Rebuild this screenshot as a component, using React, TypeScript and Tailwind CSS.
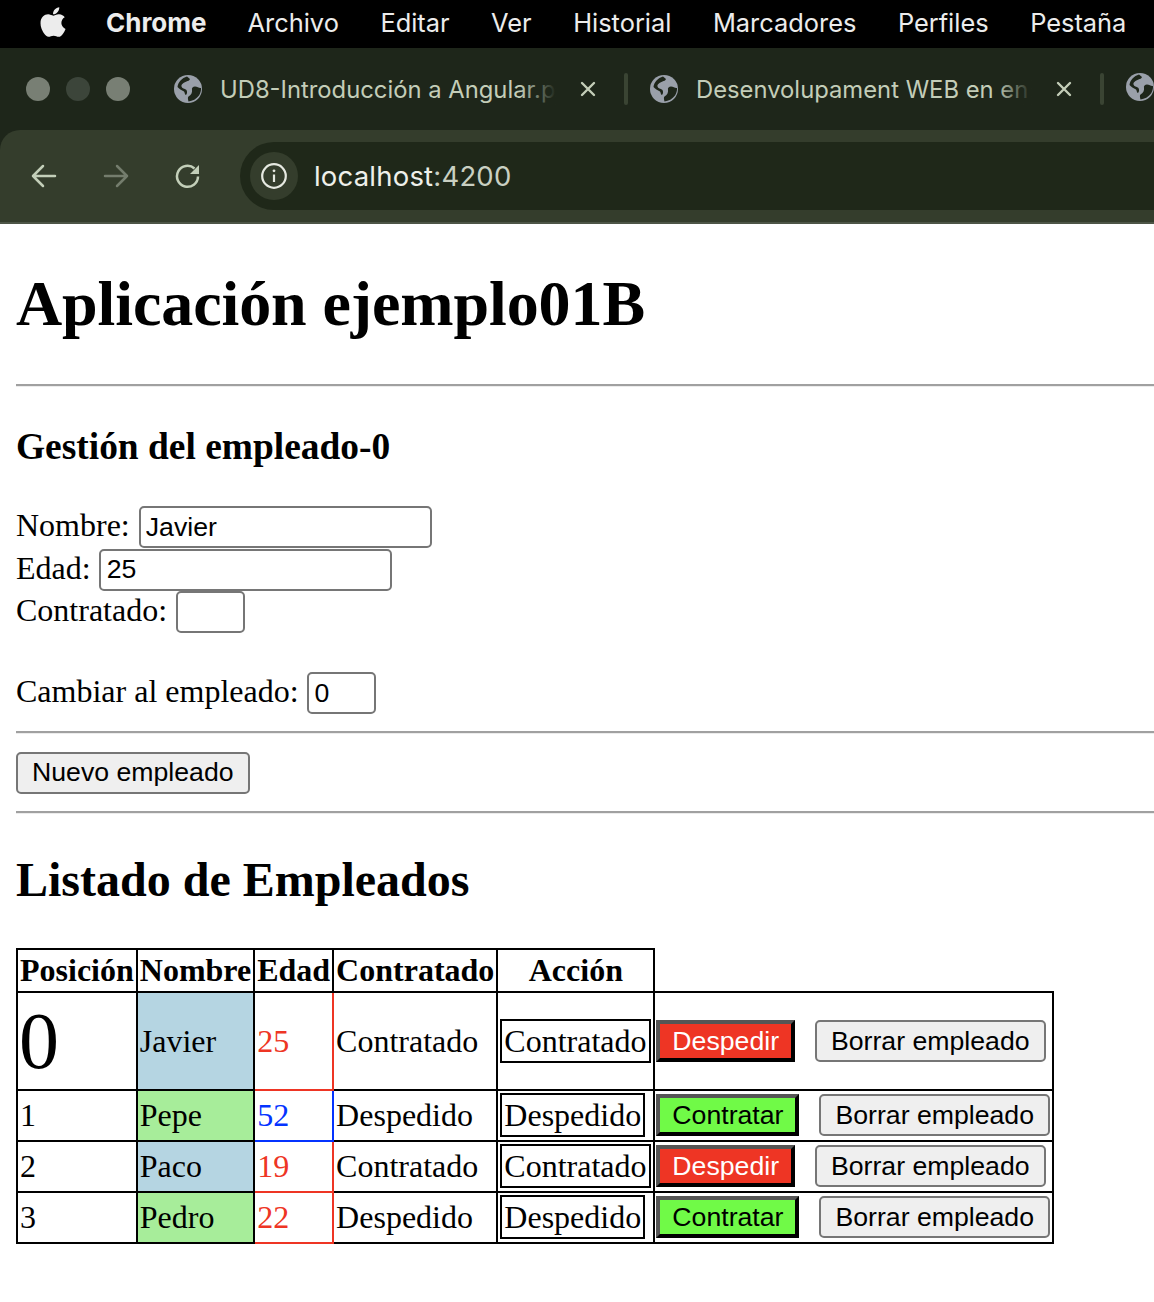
import { FaApple } from 'react-icons/fa'

const menus = ['Archivo', 'Editar', 'Ver', 'Historial', 'Marcadores', 'Perfiles', 'Pestaña']

const empleados = [
  { id: 0, nombre: 'Javier', edad: 25, contratado: true },
  { id: 1, nombre: 'Pepe', edad: 52, contratado: false },
  { id: 2, nombre: 'Paco', edad: 19, contratado: true },
  { id: 3, nombre: 'Pedro', edad: 22, contratado: false },
]

function Globe({ className }: { className?: string }) {
  return (
    <svg viewBox="0 0 28 28" className={className}>
      <circle cx="14" cy="14" r="14" fill="#9aa0aa" />
      <path
        d="M13 1.500C8 3 4 7 3.500 12c1.500 2 4 3 6.500 4.500 1 1 .5 3 2 3.500 1-1 1.500-3 .5-5-2-1.500-4.500-1.500-5-3.500-.5-2 2-4 5-5 1.500-.5 3-1 3.500-2.500z"
        fill="#1e261a"
      />
      <path
        d="M27 13c-2 .5-3.500-1.500-6-1.500-2 0-3.500 1.500-3 3.500.5 2.500-1 5-3.500 6.500-1 .5-.5 3 0 5 4-.5 8-2.500 10.500-6 1.500-2.500 2.200-5 2-7.500z"
        fill="#1e261a"
      />
    </svg>
  )
}

function Tab({ title }: { title: string }) {
  return (
    <div className="flex items-center shrink-0 w-[476px]">
      <Globe className="w-[28px] h-[28px] shrink-0" />
      <div className="relative ml-[18px] w-[336px] overflow-hidden whitespace-nowrap text-[23.800px] leading-[32px] text-[#c3cdb8] mt-[1px]">
        {title}
        <div className="absolute right-0 top-0 h-full w-[36px] bg-gradient-to-r from-transparent to-[#1e261a]" />
      </div>
      <svg viewBox="0 0 16 16" className="ml-[24px] w-[16px] h-[16px] shrink-0" stroke="#c3cdb8" strokeWidth="2.400" strokeLinecap="round">
        <path d="M2 2l12 12M14 2L2 14" />
      </svg>
      <div className="ml-[28px] w-[4px] h-[32px] rounded-sm bg-[#3a4433]" />
    </div>
  )
}

function BrowserChrome() {
  return (
    <div className="font-['Inter',sans-serif] overflow-hidden">
      {/* menu bar */}
      <div className="h-12 bg-black flex items-center text-[#ececec] text-[25.400px] whitespace-nowrap">
        <FaApple className="ml-[38px] w-[30px] h-[34px] text-[#ececec] -mt-1" />
        <span className="ml-[38px] font-bold text-[26px] -mt-[2px]">Chrome</span>
        <div className="flex ml-[41px] gap-[41.500px] -mt-[2px]">
          {menus.map((m) => (
            <span key={m}>{m}</span>
          ))}
        </div>
      </div>
      {/* tab strip */}
      <div className="h-[82px] bg-[#1e261a] flex items-center">
        <div className="flex items-center gap-[16px] ml-[26px]">
          <span className="w-6 h-6 rounded-full bg-[#787f74]" />
          <span className="w-6 h-6 rounded-full bg-[#3c453a]" />
          <span className="w-6 h-6 rounded-full bg-[#787f74]" />
        </div>
        <div className="flex ml-[44px]">
          <Tab title="UD8-Introducción a Angular.p" />
          <Tab title="Desenvolupament WEB en en" />
          <Globe className="w-[28px] h-[28px] shrink-0" />
        </div>
      </div>
      {/* toolbar */}
      <div className="bg-[#1e261a]">
        <div className="h-[94px] bg-[#343d2c] rounded-tl-[20px] border-b-2 border-[#4d5547] pt-3 pl-[31px] flex items-start">
          <div className="h-[68px] flex items-center gap-[46px]">
            <svg viewBox="0 0 26 26" className="w-[26px] h-[26px]" fill="none" stroke="#c3cfb9" strokeWidth="2.500" strokeLinecap="round" strokeLinejoin="round">
              <path d="M24 13H2M12 3L2 13l10 10" />
            </svg>
            <svg viewBox="0 0 26 26" className="w-[26px] h-[26px]" fill="none" stroke="#747d6d" strokeWidth="2.500" strokeLinecap="round" strokeLinejoin="round">
              <path d="M2 13h22M14 3l10 10-10 10" />
            </svg>
            <svg viewBox="0 0 26 26" className="w-[26px] h-[26px]" fill="none" stroke="#c3cfb9" strokeWidth="2.500">
              <path d="M23 13.500A10.500 10.500 0 1 1 19.500 5.500" />
              <path d="M24 2v9h-9z" fill="#c3cfb9" stroke="none" />
            </svg>
          </div>
          <div className="ml-[39px] flex-1 h-[68px] bg-[#1f2819] rounded-l-[34px] flex items-center pl-[10px]">
            <div className="w-12 h-12 rounded-full bg-[#343d2c] flex items-center justify-center">
              <svg viewBox="0 0 26 26" className="w-[26px] h-[26px]" fill="none" stroke="#e6e9e1" strokeWidth="2.200">
                <circle cx="13" cy="13" r="11.800" />
                <path d="M13 11.500v7.500" />
                <circle cx="13" cy="7.800" r="1.400" fill="#e6e9e1" stroke="none" />
              </svg>
            </div>
            <span className="ml-[16px] text-[27.500px] text-[#c9d0c2] tracking-[0.2px]">
              <span className="text-[#eef0ea]">localhost</span>:4200
            </span>
          </div>
        </div>
      </div>
    </div>
  )
}

function Hr() {
  return <hr className="ml-4 border-t-2 border-b border-t-[#a0a0a0] border-b-[#ececec]" />
}

const inputCls =
  "ml-[0.800px] h-[42px] border-2 border-[#767676] rounded-[5px] px-[5.200px] text-[26.670px] font-['Liberation_Sans',sans-serif] text-black bg-white outline-none align-baseline"

function FormLine({ label, value, width }: { label: string; value: string; width: string }) {
  return (
    <div className="h-[42.670px] whitespace-nowrap">
      {label} <input readOnly value={value} className={`${inputCls} ${width}`} />
    </div>
  )
}

const cellCls = 'border-2 border-black px-[2px] py-0 text-left'

export default function App() {
  return (
    <div className="bg-white min-h-[1302px] overflow-hidden font-['Liberation_Serif',serif] text-[32px] leading-[36.800px] text-black">
      <BrowserChrome />

      <h1 className="ml-4 mt-[43px] mb-[43px] text-[64px] leading-[73.600px] font-bold tracking-[-0.1px]">Aplicación ejemplo01B</h1>
      <Hr />

      <h2 className="ml-4 mt-[38.500px] mb-[38px] text-[37.440px] leading-[43px] font-bold">Gestión del empleado-0</h2>

      <div className="ml-4">
        <FormLine label="Nombre:" value="Javier" width="w-[293px]" />
        <FormLine label="Edad:" value="25" width="w-[293px]" />
        <FormLine label="Contratado:" value="" width="w-[69px]" />
        <div className="mt-[38px]">
          <FormLine label="Cambiar al empleado:" value="0" width="w-[69px]" />
        </div>
      </div>

      <div className="mt-[16.500px]">
        <Hr />
      </div>

      <div className="ml-4 mt-[17.500px] mb-[17px]">
        <button className="h-[42px] px-[14px] border-2 border-[#767676] rounded-[5px] bg-[#efefef] text-[26.670px] font-['Liberation_Sans',sans-serif] text-black">
          Nuevo empleado
        </button>
      </div>
      <Hr />

      <h2 className="ml-4 mt-[38.500px] mb-[41px] text-[48px] leading-[55px] font-bold">Listado de Empleados</h2>

      <table className="ml-4 border-collapse">
        <thead>
          <tr className="h-[43px]">
            <th className={`${cellCls} font-bold w-[119px]`}>Posición</th>
            <th className={`${cellCls} font-bold w-[117px]`}>Nombre</th>
            <th className={`${cellCls} font-bold w-[78px]`}>Edad</th>
            <th className={`${cellCls} font-bold w-[164px]`}>Contratado</th>
            <th className={`${cellCls} font-bold w-[157px] !text-center`}>Acción</th>
          </tr>
        </thead>
        <tbody>
          {empleados.map((e) => {
            const color = e.edad > 50 ? 'text-[#0433ff]' : 'text-[#ee3524]'
            const edge = e.edad > 50 ? 'border-[#0433ff]' : 'border-[#ee3524]'
            const nudge = e.id === 0 ? '' : 'pb-[2px]'
            return (
              <tr key={e.id} className={e.id === 0 ? 'h-[98px]' : 'h-[51px]'}>
                <td className={`${cellCls} ${e.id === 0 ? 'text-[80px] leading-[92px]' : ''}`}>
                  <span className={e.id === 0 ? '-ml-[1px]' : ''}>{e.id}</span>
                </td>
                <td className={`${cellCls} ${e.contratado ? 'bg-[#b5d5e2]' : 'bg-[#a7ed9a]'}`}>{e.nombre}</td>
                <td className={`border-2 px-[2px] ${edge} border-l-black ${color}`}>{e.edad}</td>
                <td className={cellCls}>{e.contratado ? 'Contratado' : 'Despedido'}</td>
                <td className={`${cellCls} ${nudge}`}>
                  <span className="inline-block border-2 border-black px-[2px] h-[44px] leading-[40px] whitespace-nowrap">
                    {e.contratado ? 'Contratado' : 'Despedido'}
                  </span>
                </td>
                <td className={`${cellCls} ${nudge} !pl-[1px] w-[397px] whitespace-nowrap`}>
                  <div className="flex items-center gap-[20px] font-['Liberation_Sans',sans-serif] text-[26.670px] leading-[30px]">
                    <button
                      className={`h-[42px] px-[12px] border-4 border-t-[#555555] border-l-[#555555] border-b-black border-r-black ${
                        e.contratado ? 'bg-[#ee3524] text-white' : 'bg-[#70fa47] text-black'
                      }`}
                    >
                      {e.contratado ? 'Despedir' : 'Contratar'}
                    </button>
                    <button className="h-[42px] px-[14px] border-2 border-[#767676] rounded-[5px] bg-[#efefef] text-black">
                      Borrar empleado
                    </button>
                  </div>
                </td>
              </tr>
            )
          })}
        </tbody>
      </table>
    </div>
  )
}
